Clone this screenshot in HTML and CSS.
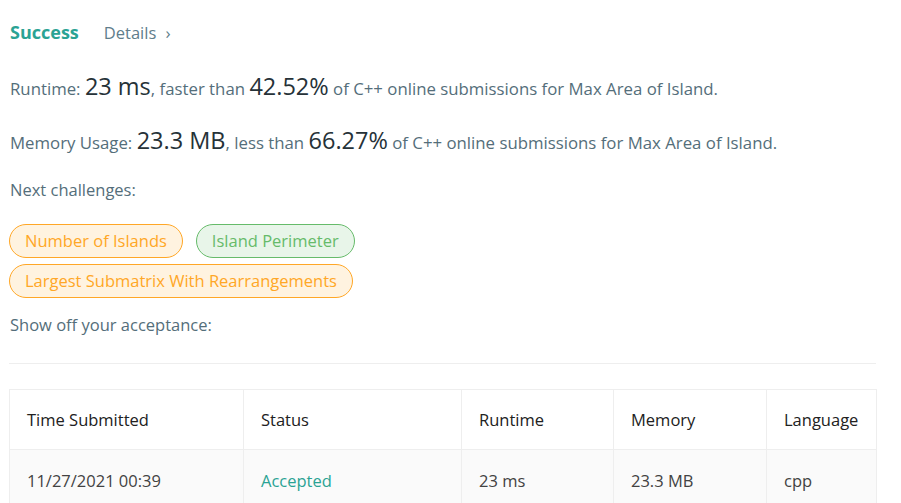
FILE: index.html
```html
<!DOCTYPE html>
<html>
<head>
<meta charset="utf-8">
<link rel="stylesheet" href="styles.css">
</head>
<body>
<div class="page">
  <div class="result-head">
    <span class="status">Success</span>
    <a class="details">Details <span class="chev">›</span></a>
  </div>
  <p class="stat first">Runtime: <span class="big">23 ms</span>, faster than <span class="big">42.52%</span> of C++ online submissions for Max Area of Island.</p>
  <p class="stat">Memory Usage: <span class="big">23.3 MB</span>, less than <span class="big">66.27%</span> of C++ online submissions for Max Area of Island.</p>
  <p class="label next">Next challenges:</p>
  <div class="tags">
    <span class="tag medium">Number of Islands</span>
    <span class="tag easy">Island Perimeter</span>
    <span class="tag medium">Largest Submatrix With Rearrangements</span>
  </div>
  <p class="label share">Show off your acceptance:</p>
  <hr class="divider">
  <table class="subs">
    <colgroup>
      <col class="w1"><col class="w2"><col class="w3"><col class="w4"><col class="w5">
    </colgroup>
    <thead>
      <tr>
        <th>Time Submitted</th>
        <th>Status</th>
        <th>Runtime</th>
        <th>Memory</th>
        <th>Language</th>
      </tr>
    </thead>
    <tbody>
      <tr>
        <td>11/27/2021 00:39</td>
        <td class="ok">Accepted</td>
        <td>23 ms</td>
        <td>23.3 MB</td>
        <td>cpp</td>
      </tr>
    </tbody>
  </table>
</div>
</body>
</html>
```
FILE: styles.css
```css
html, body {
  margin: 0;
  padding: 0;
  background: #fff;
}
body {
  font-family: "Open Sans", "Noto Sans", sans-serif;
  font-size: 16.5px;
  color: #546e7a;
}
.page {
  padding: 17px 25px 0 9px;
}
.result-head {
  display: flex;
  align-items: baseline;
  gap: 25px;
  padding-left: 1px;
  height: 30px;
  line-height: 30px;
}
.status {
  font-size: 18px;
  font-weight: 700;
  color: #2aa394;
}
.details {
  color: #607d8b;
  font-size: 16.5px;
}
.chev {
  margin-left: 5px;
  font-size: 17px;
}
.stat {
  margin: 30px 0 0 0;
  padding-left: 1px;
  line-height: 24px;
  height: 24px;
  font-size: 16.8px;
  white-space: nowrap;
}
.stat.first {
  margin-top: 27px;
}
.stat .big {
  font-size: 23.5px;
  color: #263238;
}
.label {
  margin: 0;
  padding-left: 1px;
  line-height: 24px;
}
.next {
  margin-top: 26px;
}
.tags {
  display: flex;
  flex-wrap: wrap;
  gap: 6px 13px;
  margin-top: 22px;
  width: 360px;
}
.tag {
  display: inline-block;
  height: 34px;
  line-height: 32px;
  padding: 0 15px;
  border-radius: 17px;
  box-sizing: border-box;
  font-size: 16.5px;
  white-space: nowrap;
}
.tag.medium {
  background: #fff3e0;
  border: 1px solid #ffa726;
  color: #ffa726;
}
.tag.easy {
  background: #e8f5e9;
  border: 1px solid #66bb6a;
  color: #66bb6a;
}
.share {
  margin-top: 15px;
}
.divider {
  border: 0;
  border-top: 1px solid #eeeeee;
  margin: 26px 0 0 0;
  width: 867px;
}
.subs {
  margin-top: 25px;
  width: 868px;
  table-layout: fixed;
  border-collapse: collapse;
  border: 1px solid #eeeeee;
}
.w1 { width: 234px; }
.w2 { width: 218px; }
.w3 { width: 152px; }
.w4 { width: 153px; }
.w5 { width: 110px; }
.subs th, .subs td {
  border: 1px solid #eeeeee;
  text-align: left;
  padding: 0 17px;
  font-weight: 400;
  white-space: nowrap;
}
.subs th {
  height: 59px;
  color: #212121;
}
.subs td {
  height: 60px;
  background: #fafafa;
  color: #424242;
}
.subs td.ok {
  color: #2aa394;
}
```
